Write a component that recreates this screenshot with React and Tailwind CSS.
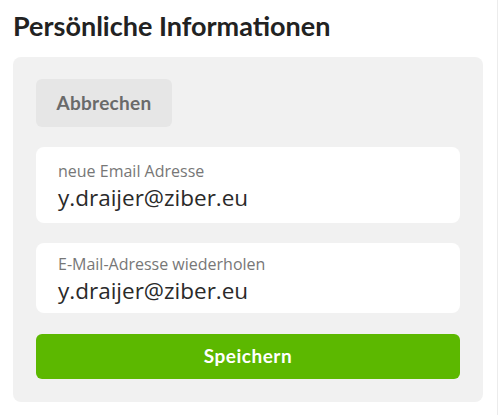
export default function App() {
  return (
    <div className="w-[498px] h-[415px] bg-white border-r border-[#ececec] pl-[13px] pr-[14px] pt-[8px]">
      <h1 className="font-['Lato',sans-serif] font-bold text-[27px] leading-[36px] text-[#222]">
        Persönliche Informationen
      </h1>
      <div className="mt-[13px] w-[470px] bg-[#f1f1f1] rounded-[8px] px-[23px] pt-[22px] pb-[23px] flex flex-col">
        <button className="w-[136px] h-[48px] rounded-[6px] bg-[#e6e6e6] text-[#6a6a6a] font-['Lato',sans-serif] font-bold text-[19px] tracking-[0.3px]">
          Abbrechen
        </button>
        <div className="mt-[20px] h-[76px] bg-white rounded-[8px] pl-[22px] pt-[14px] font-['Open_Sans',sans-serif]">
          <div className="text-[16px] leading-[20px] text-[#777]">neue Email Adresse</div>
          <div className="text-[22.5px] leading-[34px] text-[#2a2a2a]">y.draijer@ziber.eu</div>
        </div>
        <div className="mt-[20px] h-[70px] bg-white rounded-[8px] pl-[22px] pt-[11px] font-['Open_Sans',sans-serif]">
          <div className="text-[16px] leading-[20px] text-[#777]">E-Mail-Adresse wiederholen</div>
          <div className="text-[22.5px] leading-[33px] text-[#2a2a2a]">y.draijer@ziber.eu</div>
        </div>
        <button className="mt-[21px] h-[45px] rounded-[6px] bg-[#5cb800] text-white font-['Lato',sans-serif] font-bold text-[19px] tracking-[0.5px]">
          Speichern
        </button>
      </div>
    </div>
  );
}
